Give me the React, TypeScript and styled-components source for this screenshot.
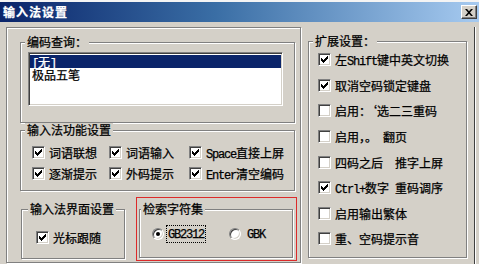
import * as React from 'react';
import styled, { createGlobalStyle } from 'styled-components';

const GlobalStyle = createGlobalStyle`
  html, body { margin: 0; padding: 0; background: #d4d0c8; }
  body {
    font-family: "Noto Sans CJK SC", "Liberation Sans", sans-serif;
    font-size: 12px;
    color: #000;
    -webkit-text-stroke: 0.25px currentColor;
  }
`;

const Window = styled.div`
  width: 479px;
  height: 264px;
  overflow: hidden;
  box-sizing: border-box;
  background: #d4d0c8;
  border-top: 2px solid #f4f4f4;
`;

const TitleBar = styled.div`
  height: 20px;
  display: flex;
  align-items: center;
  justify-content: space-between;
  padding: 0 2px 0 3px;
  background: linear-gradient(to right, #0a246a 0%, #3a6ea5 45%, #a6caf0 100%);
`;

const Title = styled.span`
  color: #fff;
  font-weight: 700;
  font-size: 12px;
  letter-spacing: 1px;
  line-height: 14px;
`;

const CloseButton = styled.button`
  width: 16px;
  height: 14px;
  padding: 0;
  display: flex;
  align-items: center;
  justify-content: center;
  box-sizing: border-box;
  background: #d4d0c8;
  border: 1px solid;
  border-color: #fff #404040 #404040 #fff;
  box-shadow: inset -1px -1px #808080;
`;

const Client = styled.div`
  display: flex;
  align-items: flex-start;
  padding: 5px 0 0 6px;
`;

const etched = `
  box-sizing: border-box;
  border: 1px solid #808080;
  box-shadow: inset 1px 1px #fff, 1px 1px #fff;
`;

const LeftPanel = styled.div`
  ${etched};
  width: 295px;
  height: 236px;
  padding: 14px 0 0 13px;
  display: flex;
  flex-direction: column;
`;

const RightPanel = styled.div`
  box-sizing: border-box;
  width: 174px;
  height: 237px;
  padding: 14px 7px 0 7px;
  border-right: 1px solid #404040;
  box-shadow: 1px 0 #fff;
`;

const Group = styled.div<{ $w: number; $h: number; $mt?: number; $ml?: number }>`
  ${etched};
  width: ${p => p.$w}px;
  height: ${p => p.$h}px;
  margin-top: ${p => p.$mt ?? 0}px;
  margin-left: ${p => p.$ml ?? 0}px;
  flex: none;
`;

const Legend = styled.div<{ $ml?: number }>`
  display: table;
  height: 14px;
  line-height: 14px;
  margin: -8px 0 0 ${p => p.$ml ?? 4}px;
  padding: 0 2px;
  background: #d4d0c8;
  white-space: nowrap;
`;

const Lat = styled.span`
  font-family: "Liberation Mono", monospace;
  font-size: 12px;
  letter-spacing: -1.2px;
`;

const ListBox = styled.div`
  box-sizing: border-box;
  width: 255px;
  height: 54px;
  margin: 3px 0 0 7px;
  padding: 2px 1px;
  background: #fff;
  border: 1px solid;
  border-color: #808080 #fff #fff #808080;
  box-shadow: inset 1px 1px #404040, inset -1px -1px #d4d0c8;
`;

const ListItem = styled.div<{ $selected?: boolean }>`
  height: 13px;
  line-height: 13px;
  padding-left: 2px;
  white-space: nowrap;
  background: ${p => (p.$selected ? '#0a246a' : 'transparent')};
  color: ${p => (p.$selected ? '#fff' : '#000')};
`;

const OptionGrid = styled.div`
  display: grid;
  grid-template-columns: 77px 80px auto;
  grid-auto-rows: 21px;
  margin: 5px 0 0 11px;
`;

const OptionList = styled.div`
  display: flex;
  flex-direction: column;
  margin: -1px 0 0 9px;
`;

const Row = styled.label<{ $h?: number; $mt?: number; $ml?: number }>`
  display: flex;
  align-items: center;
  gap: 4px;
  height: ${p => p.$h ?? 21}px;
  margin-top: ${p => p.$mt ?? 0}px;
  margin-left: ${p => p.$ml ?? 0}px;
  white-space: nowrap;
`;

const Box = styled.span`
  box-sizing: border-box;
  width: 13px;
  height: 13px;
  flex: none;
  display: flex;
  align-items: center;
  justify-content: center;
  background: #fff;
  border: 1px solid;
  border-color: #808080 #fff #fff #808080;
  box-shadow: inset 1px 1px #404040, inset -1px -1px #d4d0c8;
`;

const BottomRow = styled.div`
  display: flex;
  align-items: flex-start;
  margin-top: 6px;
`;

const Highlight = styled.div`
  box-sizing: border-box;
  width: 161px;
  height: 64px;
  margin-left: 11px;
  padding: 11px 0 0 2px;
  border: 1px solid #dc2a2a;
`;

const RadioRow = styled.div`
  display: flex;
  align-items: center;
  height: 16px;
  margin: 10px 0 0 12px;
`;

const Radio = styled.span`
  box-sizing: border-box;
  width: 12px;
  height: 12px;
  flex: none;
  border-radius: 50%;
  display: flex;
  align-items: center;
  justify-content: center;
  background: #fff;
  border: 1px solid;
  border-color: #808080 #fff #fff #808080;
  box-shadow: inset 1px 1px #404040, inset -1px -1px #d4d0c8;
`;

const Dot = styled.span`
  width: 4px;
  height: 4px;
  border-radius: 50%;
  background: #000;
`;

const RadioText = styled.span<{ $focus?: boolean }>`
  margin-left: ${p => (p.$focus ? 2 : 4)}px;
  padding: 0 1px;
  line-height: 13px;
  border: 1px dotted ${p => (p.$focus ? '#000' : 'transparent')};
`;

const Spacer = styled.span`
  width: 23px;
`;

const Check = () => (
  <svg width="7" height="7" viewBox="0 0 7 7">
    <path d="M0 2h1v1h1v1h1v-1h1v-1h1v-1h1v-1h1v3h-1v1h-1v1h-1v1h-1v1h-1v-1h-1v-1h-1z" fill="#000" />
  </svg>
);

const CheckBox = ({ checked }: { checked?: boolean }) => <Box>{checked && <Check />}</Box>;

const CloseIcon = () => (
  <svg width="8" height="7" viewBox="0 0 8 7">
    <path d="M0 0h2l2 2.2L6 0h2L5 3.5 8 7H6L4 4.8 2 7H0l3-3.5z" fill="#000" />
  </svg>
);

interface IOption {
  label: React.ReactNode;
  checked: boolean;
}

const featureOptions: IOption[] = [
  { label: '词语联想', checked: true },
  { label: '词语输入', checked: true },
  { label: <><Lat>Space</Lat>直接上屏</>, checked: true },
  { label: '逐渐提示', checked: true },
  { label: '外码提示', checked: true },
  { label: <><Lat>Enter</Lat>清空编码</>, checked: true },
];

const extendedOptions: IOption[] = [
  { label: <>左<Lat>Shift</Lat>键中英文切换</>, checked: true },
  { label: '取消空码锁定键盘', checked: true },
  { label: '启用：‘选二三重码', checked: false },
  { label: '启用，。　翻页', checked: false },
  { label: '四码之后　推字上屏', checked: false },
  { label: <><Lat>Ctrl+</Lat>数字<Lat> </Lat>重码调序</>, checked: true },
  { label: '启用输出繁体', checked: false },
  { label: '重、空码提示音', checked: false },
];

export default function App() {
  return (
    <>
      <GlobalStyle />
      <Window>
        <TitleBar>
          <Title>输入法设置</Title>
          <CloseButton aria-label="关闭"><CloseIcon /></CloseButton>
        </TitleBar>

        <Client>
          <LeftPanel>
            <Group $w={275} $h={81}>
              <Legend>编码查询：</Legend>
              <ListBox>
                <ListItem $selected><Lat>[</Lat>无<Lat>]</Lat></ListItem>
                <ListItem>极品五笔</ListItem>
              </ListBox>
            </Group>

            <Group $w={275} $h={61} $mt={7}>
              <Legend>输入法功能设置</Legend>
              <OptionGrid>
                {featureOptions.map((opt, i) => (
                  <Row key={i}>
                    <CheckBox checked={opt.checked} />
                    <span>{opt.label}</span>
                  </Row>
                ))}
              </OptionGrid>
            </Group>

            <BottomRow>
              <Group $w={104} $h={50} $mt={12} $ml={1}>
                <Legend $ml={6}>输入法界面设置</Legend>
                <Row $h={20} $mt={11} $ml={14}>
                  <CheckBox checked />
                  <span>光标跟随</span>
                </Row>
              </Group>

              <Highlight>
                <Group $w={154} $h={49}>
                  <Legend $ml={1}>检索字符集</Legend>
                  <RadioRow>
                    <Radio><Dot /></Radio>
                    <RadioText $focus><Lat>GB2312</Lat></RadioText>
                    <Spacer />
                    <Radio />
                    <RadioText><Lat>GBK</Lat></RadioText>
                  </RadioRow>
                </Group>
              </Highlight>
            </BottomRow>
          </LeftPanel>

          <RightPanel>
            <Group $w={159} $h={217}>
              <Legend>扩展设置：</Legend>
              <OptionList>
                {extendedOptions.map((opt, i) => (
                  <Row key={i} $h={25.6}>
                    <CheckBox checked={opt.checked} />
                    <span>{opt.label}</span>
                  </Row>
                ))}
              </OptionList>
            </Group>
          </RightPanel>
        </Client>
      </Window>
    </>
  );
}
